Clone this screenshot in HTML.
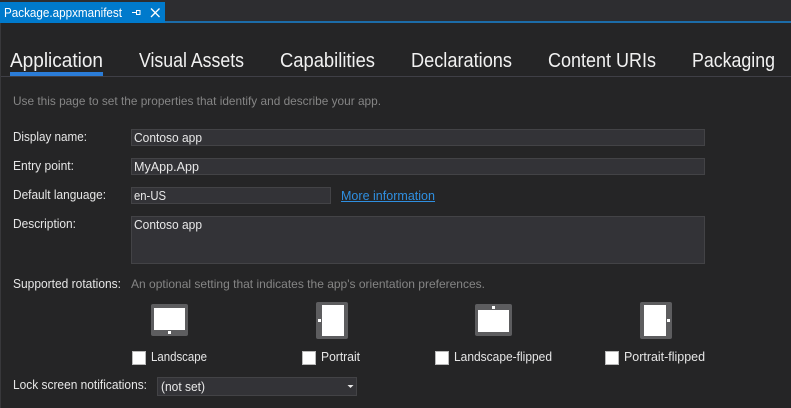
<!DOCTYPE html>
<html>
<head>
<meta charset="utf-8">
<style>
html,body{margin:0;padding:0;background:#252526;width:791px;height:408px;overflow:hidden}
svg{display:block;position:absolute;left:0;top:0}
text{font-family:"Liberation Sans",sans-serif;font-size:12.5px;fill:#e6e6e6}
.tab{font-size:20px;fill:#f1f1f1}
.g{fill:#858585;font-size:12px}
.v{fill:#e8e8e8}
</style>
</head>
<body>
<svg width="791" height="408" viewBox="0 0 791 408" xmlns="http://www.w3.org/2000/svg">
<rect width="791" height="408" fill="#252526"/>
<rect width="791" height="21" fill="#2d2d30"/>
<rect x="0" y="21" width="791" height="2" fill="#1c6ca8"/>
<rect x="0" y="2" width="165" height="21" fill="#007acc"/>
<rect x="0" y="23" width="1" height="385" fill="#38383b"/>
<text x="4" y="17" textLength="118" lengthAdjust="spacingAndGlyphs" style="font-size:13px;fill:#fff">Package.appxmanifest</text>
<path d="M132 12.500h4M136.500 10v5M136.500 10.500h3.500v4h-3.500" fill="none" stroke="#fff" stroke-width="1"/>
<path d="M151 8.500l8.500 8.500M159.500 8.500l-8.500 8.500" fill="none" stroke="#fff" stroke-width="1.300"/>

<text class="tab" x="10" y="67" textLength="93" lengthAdjust="spacingAndGlyphs">Application</text>
<text class="tab" x="139" y="67" textLength="105" lengthAdjust="spacingAndGlyphs">Visual Assets</text>
<text class="tab" x="280" y="67" textLength="95" lengthAdjust="spacingAndGlyphs">Capabilities</text>
<text class="tab" x="411" y="67" textLength="101" lengthAdjust="spacingAndGlyphs">Declarations</text>
<text class="tab" x="548" y="67" textLength="108" lengthAdjust="spacingAndGlyphs">Content URIs</text>
<text class="tab" x="692" y="67" textLength="83" lengthAdjust="spacingAndGlyphs">Packaging</text>
<rect x="1" y="76" width="790" height="1" fill="#3f3f46"/>
<rect x="10" y="72" width="93" height="4" fill="#2b7dd8"/>

<text class="g" x="13" y="105" textLength="368" lengthAdjust="spacingAndGlyphs">Use this page to set the properties that identify and describe your app.</text>

<text x="13" y="141" textLength="74" lengthAdjust="spacingAndGlyphs">Display name:</text>
<text x="13" y="170" textLength="61" lengthAdjust="spacingAndGlyphs">Entry point:</text>
<text x="13" y="199" textLength="93" lengthAdjust="spacingAndGlyphs">Default language:</text>
<text x="13" y="228" textLength="63" lengthAdjust="spacingAndGlyphs">Description:</text>

<rect x="131.500" y="129.500" width="573" height="16" fill="#333337" stroke="#434346"/>
<rect x="131.500" y="158.500" width="573" height="16" fill="#333337" stroke="#434346"/>
<rect x="131.500" y="187.500" width="199" height="16" fill="#333337" stroke="#434346"/>
<rect x="131.500" y="216.500" width="573" height="47" fill="#333337" stroke="#434346"/>
<text class="v" x="134" y="142" textLength="68" lengthAdjust="spacingAndGlyphs">Contoso app</text>
<text class="v" x="134" y="171" textLength="65" lengthAdjust="spacingAndGlyphs">MyApp.App</text>
<text class="v" x="134" y="200" textLength="32" lengthAdjust="spacingAndGlyphs">en-US</text>
<text class="v" x="134" y="229" textLength="68" lengthAdjust="spacingAndGlyphs">Contoso app</text>
<text x="341" y="200" textLength="94" lengthAdjust="spacingAndGlyphs" style="fill:#2f8fe0">More information</text>
<rect x="341" y="201" width="94" height="1" fill="#2f8fe0"/>

<text x="13" y="288" textLength="108" lengthAdjust="spacingAndGlyphs">Supported rotations:</text>
<text class="g" x="131" y="288" textLength="354" lengthAdjust="spacingAndGlyphs">An optional setting that indicates the app's orientation preferences.</text>

<rect x="151" y="304" width="37" height="32" rx="2" fill="#5d5d5f"/>
<rect x="154" y="308" width="31" height="22" fill="#fff"/>
<rect x="168" y="331" width="3" height="3" fill="#fff"/>

<rect x="316" y="302" width="32" height="37" rx="2" fill="#5d5d5f"/>
<rect x="322" y="305" width="22" height="31" fill="#fff"/>
<rect x="318" y="319" width="3" height="3" fill="#fff"/>

<rect x="475" y="304" width="37" height="32" rx="2" fill="#5d5d5f"/>
<rect x="478" y="310" width="31" height="22" fill="#fff"/>
<rect x="492" y="306" width="3" height="3" fill="#fff"/>

<rect x="640" y="302" width="32" height="37" rx="2" fill="#5d5d5f"/>
<rect x="644" y="305" width="22" height="31" fill="#fff"/>
<rect x="667" y="319" width="3" height="3" fill="#fff"/>

<rect x="132.500" y="351.500" width="13" height="13" fill="#fff" stroke="#b8b8b8"/>
<rect x="302.500" y="351.500" width="13" height="13" fill="#fff" stroke="#b8b8b8"/>
<rect x="435.500" y="351.500" width="13" height="13" fill="#fff" stroke="#b8b8b8"/>
<rect x="605.500" y="351.500" width="13" height="13" fill="#fff" stroke="#b8b8b8"/>
<text x="151" y="361" textLength="56" lengthAdjust="spacingAndGlyphs">Landscape</text>
<text x="321" y="361" textLength="39" lengthAdjust="spacingAndGlyphs">Portrait</text>
<text x="454" y="361" textLength="98" lengthAdjust="spacingAndGlyphs">Landscape-flipped</text>
<text x="624" y="361" textLength="81" lengthAdjust="spacingAndGlyphs">Portrait-flipped</text>

<text x="13" y="389" textLength="134" lengthAdjust="spacingAndGlyphs">Lock screen notifications:</text>
<rect x="157.500" y="377.500" width="199" height="18" fill="#333337" stroke="#434346"/>
<text class="v" x="161" y="391" textLength="44" lengthAdjust="spacingAndGlyphs">(not set)</text>
<path d="M347.500 385h6l-3 3z" fill="#e8e8e8"/>
</svg>
</body>
</html>
